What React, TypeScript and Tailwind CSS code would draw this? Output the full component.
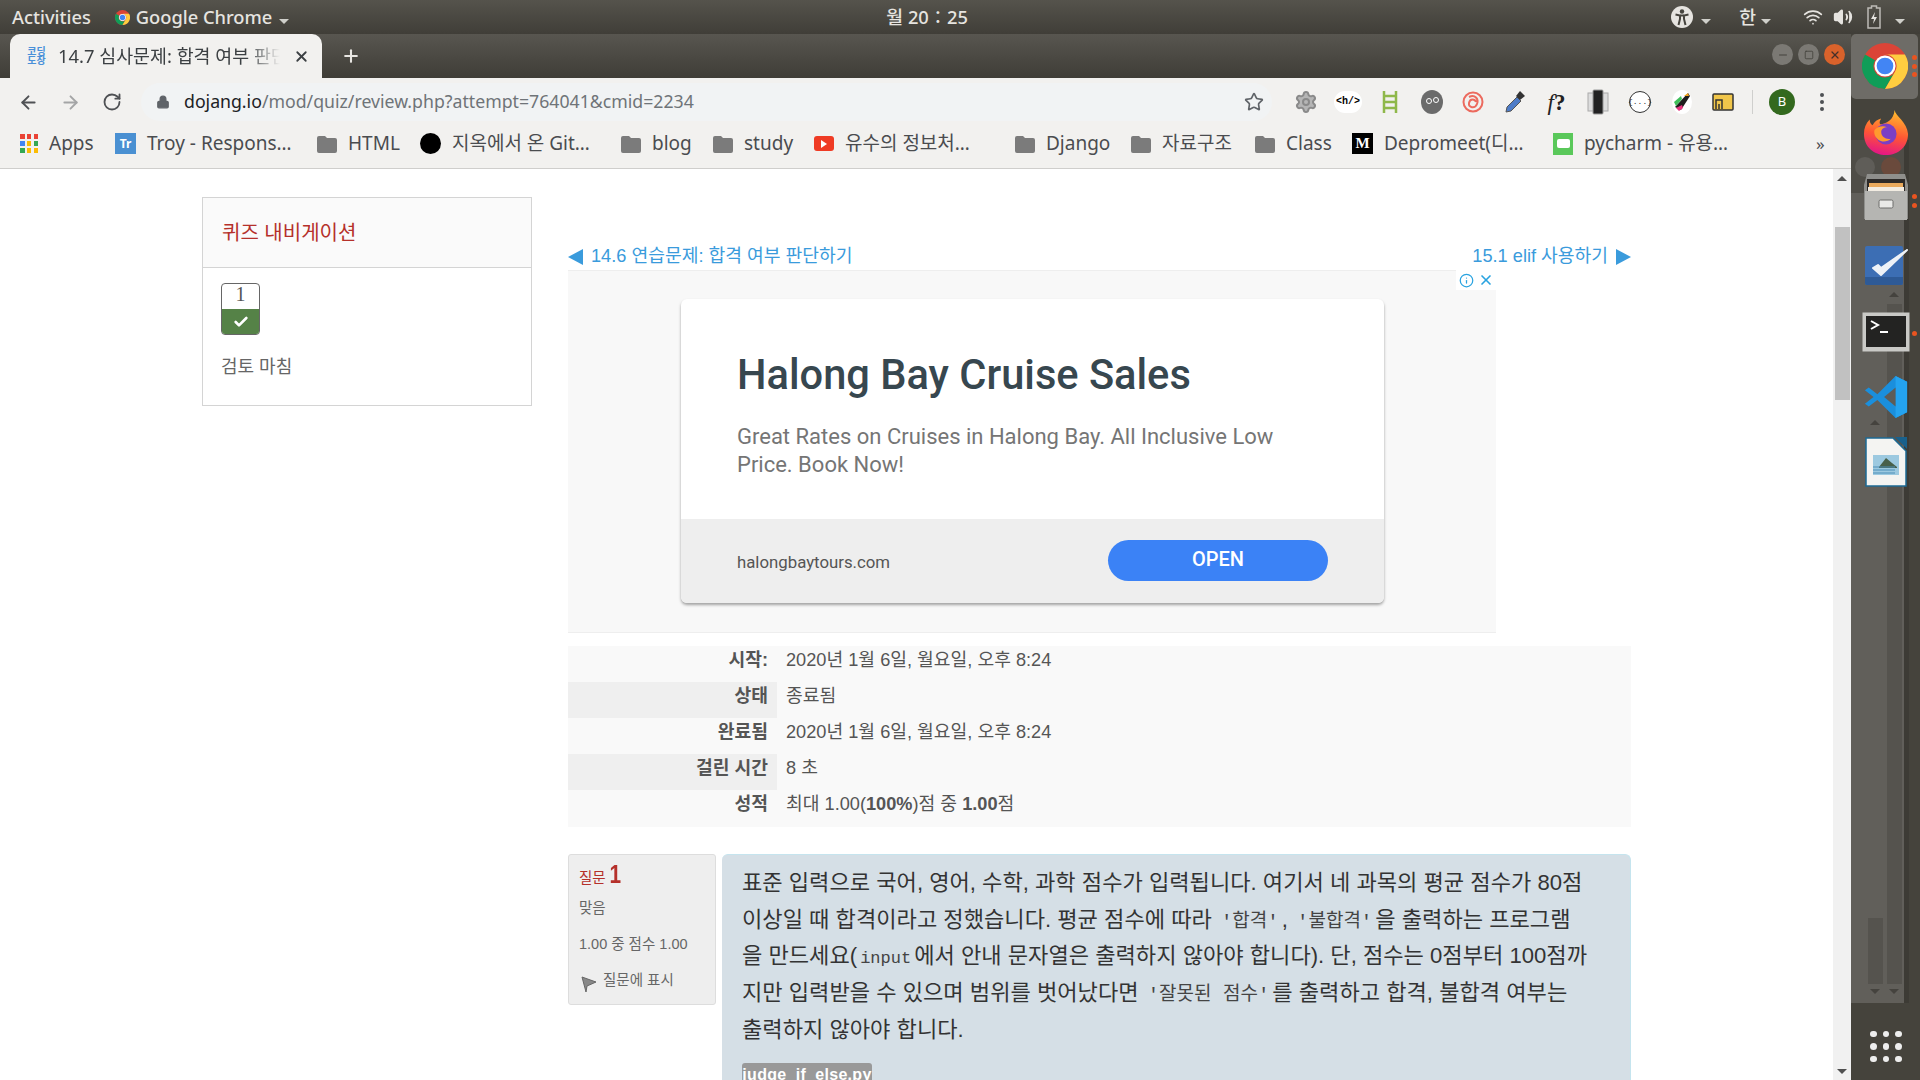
import { ArrowLeft, ArrowRight, RotateCw, Lock, Star, X, Plus, Check, Info, Minus, Square, Volume2, Wifi, Settings } from "lucide-react";

const ui = "font-['Noto_Sans','Noto_Sans_CJK_KR',sans-serif]";

function ChromeLogo({ size }: { size: number }) {
  return (
    <svg width={size} height={size} viewBox="0 0 48 48">
      <circle cx="24" cy="24" r="24" fill="#db4437" />
      <path d="M3.2 12A24 24 0 0 0 24 48L34.400 30A12 12 0 0 1 13.600 18Z" fill="#0f9d58" />
      <path d="M24 48A24 24 0 0 0 44.800 12H24a12 12 0 0 1 10.400 18Z" fill="#ffcd40" />
      <circle cx="24" cy="24" r="11" fill="#fff" />
      <circle cx="24" cy="24" r="8.700" fill="#4285f4" />
    </svg>
  );
}

function Firefox() {
  return (
    <svg width="46" height="46" viewBox="0 0 48 48">
      <defs>
        <linearGradient id="ff" x1="0.6" y1="0" x2="0.4" y2="1">
          <stop offset="0" stopColor="#ffbd2e" />
          <stop offset="0.55" stopColor="#ff5634" />
          <stop offset="1" stopColor="#e31587" />
        </linearGradient>
      </defs>
      <path d="M33 1c1 7 13 12 14 25 0 13-10 22-23 22C11 48 1 39 1 26c0-6 2-11 6-15 0 3 1 5 3 6 2-4 5-6 9-7-2 3-2 5-1 6 6-1 14-4 15-15Z" fill="url(#ff)" />
      <circle cx="24" cy="26" r="11" fill="#7b3fc4" />
      <path d="M12 22c3-4 9-5 13-3-3 0-6 2-6 5 0 5 5 8 10 7-3 3-9 4-13 1-3-2-5-6-4-10Z" fill="#ff9a2e" />
    </svg>
  );
}

function FilesIcon() {
  return (
    <svg width="46" height="48" viewBox="0 0 46 48">
      <path d="M4 1h38l3 11v34H1V12Z" fill="#8f8f8c" />
      <rect x="4" y="6" width="38" height="14" fill="#2d2a28" />
      <rect x="6" y="10" width="34" height="4" fill="#e9a95c" />
      <rect x="5" y="14" width="36" height="5" fill="#f2ece2" />
      <path d="M2 18h42v29H2Z" fill="#b5b5b2" />
      <rect x="16" y="27" width="14" height="8" rx="1.500" fill="#e9e9e7" stroke="#6c6c6a" />
    </svg>
  );
}

function TasksIcon() {
  return (
    <svg width="46" height="44" viewBox="0 0 46 44">
      <rect x="2" y="2" width="38" height="39" rx="2" fill="#3c6eb4" />
      <path d="M2 33h38v6a2 2 0 0 1-2 2H4a2 2 0 0 1-2-2Z" fill="#2e5a96" />
      <path d="M10 24l8 7L44 6 18 24l-3-3Z" fill="#eef2f7" stroke="#eef2f7" strokeWidth="2" strokeLinejoin="round" />
    </svg>
  );
}

function TerminalIcon() {
  return (
    <svg width="48" height="40" viewBox="0 0 48 40">
      <rect x="0.500" y="0.500" width="47" height="39" fill="#c9c9c6" />
      <rect x="4" y="4" width="40" height="31" fill="#232322" />
      <path d="M9 9l7 4-7 4" fill="none" stroke="#fff" strokeWidth="2" />
      <path d="M18 20h8" stroke="#fff" strokeWidth="2" />
    </svg>
  );
}

function VsCode() {
  return (
    <svg width="46" height="46" viewBox="0 0 48 48">
      <path d="M34 2 46 8v32l-12 6L15 27l-9 7-4-3 9-7-9-7 4-3 9 7Z" fill="#1a8fdd" />
      <path d="M34 2 46 8v32l-12 6Z" fill="#24a3f0" />
      <path d="M34 14 22 24l12 10Z" fill="#5e5c57" />
    </svg>
  );
}

function ImpressIcon() {
  return (
    <svg width="42" height="50" viewBox="0 0 42 50">
      <path d="M1 1h27l13 13v35H1Z" fill="#f4f4f2" stroke="#1c6a94" strokeWidth="1.500" />
      <path d="M30 0h12v12Z" fill="#19618c" />
      <rect x="8" y="18" width="26" height="20" fill="#9cc9e0" />
      <path d="M14 30l7-9 6 5 5 4v1H14Z" fill="#47604a" />
      <path d="M8 30h22M8 33h22M8 36h22" stroke="#4d8fb8" strokeWidth="1" />
    </svg>
  );
}

function FolderIcon() {
  return (
    <svg width="20" height="18" viewBox="0 0 20 18" className="shrink-0">
      <path d="M2 1h6l2 2h8a2 2 0 0 1 2 2v11a2 2 0 0 1-2 2H2a2 2 0 0 1-2-2V3a2 2 0 0 1 2-2Z" fill="#7b7b7b" />
    </svg>
  );
}

function AppsIcon() {
  const colors = ["#ea4335", "#ea4335", "#ea4335", "#4285f4", "#fbbc05", "#34a853", "#34a853", "#fbbc05", "#fbbc05"];
  return (
    <div className="grid grid-cols-3 gap-[2.500px] w-[18px] shrink-0">
      {colors.map((c, i) => (
        <span key={i} className="w-[4.500px] h-[4.500px]" style={{ background: c }} />
      ))}
    </div>
  );
}

function AccessIcon() {
  return (
    <svg width="22" height="22" viewBox="0 0 22 22">
      <circle cx="11" cy="11" r="11" fill="#e6e4e0" />
      <circle cx="11" cy="5.500" r="2.200" fill="#45433d" />
      <path d="M4.500 8.500 9 9.500v3.500L7.500 19M17.500 8.500 13 9.500v3.500l1.500 6M9 9.500h4" fill="none" stroke="#45433d" strokeWidth="2" />
    </svg>
  );
}

function BatteryIcon() {
  return (
    <svg width="14" height="24" viewBox="0 0 14 24">
      <path d="M4.500 1h5v2h3.500v20H1V3h3.500Z" fill="none" stroke="#bdbbb6" strokeWidth="1.500" />
      <path d="M8 7 4 14h3l-1 5 4-7H7Z" fill="#e6e4e0" />
    </svg>
  );
}

function Bookmark({ icon, label, className }: { icon: React.ReactNode; label: string; className: string }) {
  return (
    <div className={`flex items-center gap-[11px] whitespace-nowrap shrink-0 ${className}`}>
      {icon}
      <span>{label}</span>
    </div>
  );
}

function Caret({ color = "#cfcfca" }: { color?: string }) {
  return <span className="inline-block w-0 h-0 border-x-[5px] border-x-transparent border-t-[5px]" style={{ borderTopColor: color }} />;
}

function TopBar() {
  return (
    <div className={`h-[34px] shrink-0 flex items-center bg-gradient-to-b from-[#55534c] to-[#403e38] text-[#e6e4e0] text-[18.3px] font-medium pl-[12px] pr-[15px] ${ui}`}>
      <span>Activities</span>
      <div className="flex items-center ml-[24px] gap-[6px]">
        <ChromeLogo size={15} />
        <span>Google Chrome</span>
        <span className="ml-[1px]"><Caret /></span>
      </div>
      <span className="ml-[597px]">월 20∶25</span>
      <div className="ml-auto flex items-center">
        <AccessIcon />
        <span className="ml-[8px]"><Caret /></span>
        <span className="ml-[28px]">한</span>
        <span className="ml-[5px]"><Caret /></span>
        <Wifi className="ml-[32px] w-[20px] h-[20px]" />
        <Volume2 className="ml-[10px] w-[20px] h-[20px]" fill="#e6e4e0" />
        <span className="ml-[14px] flex"><BatteryIcon /></span>
        <span className="ml-[14px]"><Caret /></span>
      </div>
    </div>
  );
}

function TabStrip() {
  return (
    <div className={`h-[44px] shrink-0 flex items-end bg-gradient-to-b from-[#585650] to-[#3f3d37] pl-[10px] ${ui}`}>
      <div className="w-[312px] h-[44px] bg-[#f2f1ef] rounded-t-[10px] flex items-center pl-[17px] shrink-0">
        <div className="w-[19px] text-[10px] leading-[9px] font-bold text-[#4a90d9] text-center shrink-0">코딩<br />도장</div>
        <div className="ml-[12px] w-[222px] overflow-hidden whitespace-nowrap text-[18.4px] text-[#3c4043] [mask-image:linear-gradient(to_right,black_85%,transparent)]">14.7 심사문제: 합격 여부 판단하기</div>
        <X className="ml-[13px] w-[17px] h-[17px] text-[#3c4043] shrink-0" strokeWidth={2.5} />
      </div>
      <Plus className="ml-[19px] mb-[12px] w-[20px] h-[20px] text-[#e8e6e2] shrink-0" strokeWidth={2.5} />
      <div className="ml-auto mr-[6px] mb-[13px] flex items-center gap-[5px]">
        <span className="w-[21px] h-[21px] rounded-full bg-[#7b7974] flex items-center justify-center"><Minus className="w-[12px] h-[12px] text-[#45433d]" /></span>
        <span className="w-[21px] h-[21px] rounded-full bg-[#7b7974] flex items-center justify-center"><Square className="w-[10px] h-[10px] text-[#45433d]" /></span>
        <span className="w-[21px] h-[21px] rounded-full bg-[#d9622b] flex items-center justify-center"><X className="w-[12px] h-[12px] text-[#45302a]" strokeWidth={2.5} /></span>
      </div>
    </div>
  );
}

function ExtensionIcons() {
  return (
    <div className="flex items-center ml-[13px]">
      <div className="w-[42px] flex justify-center"><Settings className="w-[24px] h-[24px] text-[#8a8a8a]" fill="#b5b5b5" /></div>
      <div className="w-[42px] flex justify-center"><span className="font-['Liberation_Mono',monospace] font-bold text-[10px] text-black bg-white rounded-full px-[2px] leading-[22px]">&lt;h/&gt;</span></div>
      <div className="w-[42px] flex justify-center">
        <svg width="18" height="24" viewBox="0 0 18 24"><path d="M3 1v22M15 1v22M3 6h12M3 12h12M3 18h12" stroke="#8fb84a" strokeWidth="2.500" /></svg>
      </div>
      <div className="w-[41px] flex justify-center">
        <svg width="22" height="24" viewBox="0 0 22 24"><ellipse cx="11" cy="12" rx="11" ry="12" fill="#6b6b6b" /><circle cx="8" cy="11" r="2.500" fill="none" stroke="#fff" /><circle cx="15" cy="10" r="2.500" fill="none" stroke="#fff" /></svg>
      </div>
      <div className="w-[42px] flex justify-center">
        <svg width="22" height="24" viewBox="0 0 22 24" fill="none" stroke="#ec6a5e" strokeWidth="2"><circle cx="11" cy="12" r="9.500" /><path d="M7 7c6-3 10 2 8 7s-9 4-8-1 6-4 7-1" /></svg>
      </div>
      <div className="w-[42px] flex justify-center">
        <svg width="24" height="26" viewBox="0 0 24 26"><path d="M3 23l1-5L14 8l4 4L8 22Z" fill="#4d7cc9" stroke="#555" /><path d="M13 7l4-5 5 5-5 4Z" fill="#333" /></svg>
      </div>
      <div className="w-[41px] flex justify-center"><span className="font-['Liberation_Serif',serif] text-[23px] text-[#222] leading-none"><i>f</i><b>?</b></span></div>
      <div className="w-[42px] flex justify-center">
        <svg width="22" height="26" viewBox="0 0 22 26"><rect x="1" y="4" width="20" height="18" fill="#ddd" stroke="#aaa" /><rect x="6" y="1" width="10" height="24" rx="1" fill="#222" stroke="#999" /></svg>
      </div>
      <div className="w-[42px] flex justify-center"><span className="w-[22px] h-[22px] rounded-full border-[1.5px] border-[#333] bg-white flex items-center justify-center text-[8px] text-[#333] font-['Liberation_Mono',monospace]">{"{...}"}</span></div>
      <div className="w-[41px] flex justify-center">
        <svg width="22" height="24" viewBox="0 0 22 24"><ellipse cx="11" cy="12" rx="10" ry="12" fill="#fff" /><path d="M4 17 17 3l2 3-9 14Z" fill="#1d1d1d" /><path d="M3 12l7-6 1 3-6 7Z" fill="#3fbf5a" /><path d="M5 18l6-3 1 3-4 3Z" fill="#e9327f" /><path d="M13 6l4-3 1 3Z" fill="#f1a21d" /></svg>
      </div>
      <div className="w-[42px] flex justify-center">
        <svg width="22" height="18" viewBox="0 0 22 18"><rect x="1" y="1" width="20" height="16" rx="1" fill="#f1c64a" stroke="#333" strokeWidth="1.500" /><path d="M4 16V7h6v9M7 16v-5" fill="none" stroke="#333" strokeWidth="1.500" /></svg>
      </div>
    </div>
  );
}

function Toolbar() {
  return (
    <div className={`h-[48px] shrink-0 flex items-center bg-[#f2f1ef] pl-[18px] ${ui}`}>
      <ArrowLeft className="w-[21px] h-[21px] text-[#4f5154] shrink-0" strokeWidth={2.2} />
      <ArrowRight className="ml-[21px] w-[21px] h-[21px] text-[#a4a5a6] shrink-0" strokeWidth={2.2} />
      <RotateCw className="ml-[21px] w-[20px] h-[20px] text-[#4f5154] shrink-0" strokeWidth={2.2} />
      <div className="ml-[19px] w-[1131px] h-[38px] rounded-full bg-[#f1f3f4] flex items-center pl-[15px] pr-[8px] shrink-0">
        <Lock className="w-[14px] h-[14px] text-[#5f6368] shrink-0" fill="#5f6368" />
        <div className="ml-[14px] -mt-[1px] text-[17.7px] text-[#6f7478] whitespace-nowrap"><span className="text-[#202124]">dojang.io</span>/mod/quiz/review.php?attempt=764041&amp;cmid=2234</div>
        <Star className="ml-auto w-[20px] h-[20px] text-[#5f6368] shrink-0" strokeWidth={2} />
      </div>
      <ExtensionIcons />
      <div className="w-px h-[24px] bg-[#cfcfcd] ml-[8px]" />
      <span className="ml-[16px] w-[26px] h-[26px] rounded-full bg-[#33691e] text-white text-[13px] flex items-center justify-center shrink-0">B</span>
      <span className="ml-[25px] flex flex-col gap-[3px]">
        <i className="block w-[4px] h-[4px] rounded-full bg-[#4f5154]" />
        <i className="block w-[4px] h-[4px] rounded-full bg-[#4f5154]" />
        <i className="block w-[4px] h-[4px] rounded-full bg-[#4f5154]" />
      </span>
    </div>
  );
}

function BookmarksBar() {
  return (
    <div className={`h-[43px] shrink-0 flex items-center bg-[#f2f1ef] border-b border-[#cfcecc] pl-[20px] pb-[7px] text-[19px] text-[#4a4c4f] ${ui}`}>
      <Bookmark className="w-[95px]" icon={<AppsIcon />} label="Apps" />
      <Bookmark className="w-[202px]" icon={<span className="w-[21px] h-[21px] bg-[#4a90d2] text-white text-[12px] font-bold flex items-center justify-center">Tr</span>} label="Troy - Respons…" />
      <Bookmark className="w-[103px]" icon={<FolderIcon />} label="HTML" />
      <Bookmark className="w-[201px]" icon={<span className="w-[21px] h-[21px] bg-black rounded-full" />} label="지옥에서 온 Git…" />
      <Bookmark className="w-[92px]" icon={<FolderIcon />} label="blog" />
      <Bookmark className="w-[101px]" icon={<FolderIcon />} label="study" />
      <Bookmark className="w-[201px]" icon={<span className="w-[20px] h-[15px] bg-[#ef3b24] rounded-[3px] flex items-center justify-center"><span className="w-0 h-0 border-y-[4px] border-y-transparent border-l-[6px] border-l-white" /></span>} label="유수의 정보처…" />
      <Bookmark className="w-[116px]" icon={<FolderIcon />} label="Django" />
      <Bookmark className="w-[124px]" icon={<FolderIcon />} label="자료구조" />
      <Bookmark className="w-[97px]" icon={<FolderIcon />} label="Class" />
      <Bookmark className="w-[201px]" icon={<span className="w-[21px] h-[21px] bg-black text-white text-[15px] font-bold font-['Liberation_Serif',serif] flex items-center justify-center">M</span>} label="Depromeet(디…" />
      <Bookmark className="w-[240px]" icon={<span className="w-[20px] h-[22px] bg-[#5ac85a] flex items-center justify-center"><span className="w-[13px] h-[9px] bg-white rounded-[2px]" /></span>} label="pycharm - 유용…" />
      <span className="ml-[23px] text-[17px]">»</span>
    </div>
  );
}

function QuizSidebar() {
  return (
    <div className="w-[330px] h-[209px] mt-[28px] shrink-0 border border-[#d4d4d4] bg-white">
      <div className="h-[70px] bg-[#fafafa] border-b border-[#d4d4d4] flex items-center pl-[19px] text-[20px] text-[#b5302a]">퀴즈 내비게이션</div>
      <div className="pl-[18px] pt-[15px]">
        <div className="w-[39px] h-[52px] rounded-[4px] border border-[#666] overflow-hidden flex flex-col">
          <div className="h-[25px] text-center text-[20px] leading-[21px] text-[#555] font-['Liberation_Serif',serif]">1</div>
          <div className="flex-1 bg-[#558247] flex items-center justify-center"><Check className="w-[16px] h-[16px] text-white" strokeWidth={4} /></div>
        </div>
        <div className="mt-[19px] text-[18px] text-[#666]">검토 마침</div>
      </div>
    </div>
  );
}

function AdBlock() {
  return (
    <div className="relative w-[928px] h-[363px] bg-[#f8f8f8] border-t border-b border-[#eeeeee] font-['Roboto',sans-serif] pt-[28px] pl-[113px]">
      <div className="absolute -top-[1px] right-0 w-[40px] h-[20px] bg-white flex items-center justify-center gap-[4px] text-[#29a3e0]">
        <Info className="w-[15px] h-[15px]" />
        <X className="w-[16px] h-[16px]" strokeWidth={2.5} />
      </div>
      <div className="w-[703px] h-[304px] rounded-[6px] overflow-hidden bg-white shadow-[0_2px_3px_rgba(0,0,0,0.35)] flex flex-col">
        <div className="h-[220px] pl-[56px] pt-[52px]">
          <div className="text-[41.6px] leading-[48px] font-medium text-[#37474f] whitespace-nowrap">Halong Bay Cruise Sales</div>
          <div className="mt-[24px] text-[22px] leading-[28px] text-[#757575] w-[560px]">Great Rates on Cruises in Halong Bay. All Inclusive Low Price. Book Now!</div>
        </div>
        <div className="flex-1 bg-[#eeeeee] flex items-center pl-[56px]">
          <span className="text-[16.8px] text-[#555] mt-[3px]">halongbaytours.com</span>
          <div className="ml-auto mr-[56px] mb-[2px] w-[220px] h-[41px] rounded-full bg-[#3b82f6] text-white text-[20px] font-medium flex items-center justify-center pb-[2px]">OPEN</div>
        </div>
      </div>
    </div>
  );
}

const summaryRows = [
  { label: "시작:", value: <>2020년 1월 6일, 월요일, 오후 8:24</> },
  { label: "상태", value: <>종료됨</>, alt: true },
  { label: "완료됨", value: <>2020년 1월 6일, 월요일, 오후 8:24</> },
  { label: "걸린 시간", value: <>8 초</>, alt: true },
  { label: "성적", value: <>최대 1.00(<b>100%</b>)점 중 <b>1.00</b>점</> },
];

function SummaryTable() {
  return (
    <div className="mt-[13px] bg-[#f9f9f9] text-[18.2px] text-[#555] pb-px">
      {summaryRows.map((r) => (
        <div key={r.label} className="flex h-[36px] items-center">
          <div className={`w-[209px] h-full flex items-center justify-end pr-[9px] pb-[7px] font-bold ${r.alt ? "bg-[#efefef]" : ""}`}>{r.label}</div>
          <div className="pl-[9px] pb-[7px]">{r.value}</div>
        </div>
      ))}
    </div>
  );
}

const monoHangul = "font-['Liberation_Mono','Noto_Sans_CJK_KR',monospace] text-[19px] leading-none px-[3px] text-[#444]";
const monoLatin = "font-['Liberation_Mono',monospace] text-[17px] leading-none px-[3px] text-[#444]";

function Question() {
  return (
    <div className="mt-[27px] flex gap-[6px] items-start">
      <div className="w-[148px] h-[151px] shrink-0 bg-[#eeeeee] border border-[#dddddd] rounded-[3px] pl-[10px] pt-[4px] text-[14.5px] text-[#666]">
        <div className="h-[30px] flex items-baseline text-[#b5302a]">질문<span className="ml-[2px] text-[26px] leading-[30px] font-bold font-['Liberation_Sans',sans-serif] scale-x-[0.8]">1</span></div>
        <div className="mt-[9px]">맞음</div>
        <div className="mt-[14px]">1.00 중 점수 1.00</div>
        <div className="mt-[19px] flex items-center pl-[2px]">
          <svg width="16" height="18" viewBox="0 0 16 18"><path d="M1 2l14 5-9 4-1 6Z" fill="#888" stroke="#666" /></svg>
          <span className="ml-[6px] -mt-[6px]">질문에 표시</span>
        </div>
      </div>
      <div className="flex-1 h-[300px] bg-[#d5dfe6] border-t border-[#c5e4ee] border-r rounded-[6px] pl-[20px] pt-[10px] text-[22.1px] leading-[36.7px] text-[#333] whitespace-nowrap">
        표준 입력으로 국어, 영어, 수학, 과학 점수가 입력됩니다. 여기서 네 과목의 평균 점수가 80점<br />
        이상일 때 합격이라고 정했습니다. 평균 점수에 따라 <span className={monoHangul}>'합격'</span>, <span className={monoHangul}>'불합격'</span>을 출력하는 프로그램<br />
        을 만드세요(<span className={monoLatin}>input</span>에서 안내 문자열은 출력하지 않아야 합니다). 단, 점수는 0점부터 100점까<br />
        지만 입력받을 수 있으며 범위를 벗어났다면 <span className={monoHangul}>'잘못된 점수'</span>를 출력하고 합격, 불합격 여부는<br />
        출력하지 않아야 합니다.
        <div className="mt-[14px] w-[130px] h-[24px] rounded-[3px] bg-[#999999] text-white text-[16px] leading-[24px] font-bold text-center font-['Liberation_Sans',sans-serif] tracking-[0.3px]">judge_if_else.py</div>
      </div>
    </div>
  );
}

function Scrollbar() {
  return (
    <div className="w-[18px] shrink-0 bg-[#f1f1f1] flex flex-col items-center pt-[7px] pb-[6px]">
      <span className="w-0 h-0 border-x-[5px] border-x-transparent border-b-[5px] border-b-[#505050]" />
      <div className="mt-[46px] w-[15px] h-[173px] bg-[#c1c1c1]" />
      <span className="mt-auto w-0 h-0 border-x-[5px] border-x-transparent border-t-[5px] border-t-[#505050]" />
    </div>
  );
}

function Dock() {
  return (
    <div className="relative w-[69px] shrink-0 bg-[#45433c] overflow-hidden">
      {/* window behind the dock */}
      <div className="absolute left-0 top-[106px] w-[53px] h-[863px] bg-[#615f5a]">
        <div className="h-[53px] bg-[#4f4d47] flex items-center pl-[4px] gap-[6px]">
          <span className="w-[20px] h-[20px] rounded-full bg-[#5f5d58]" />
          <span className="w-[20px] h-[20px] rounded-full bg-[#6a4a3c]" />
        </div>
      </div>
      <div className="absolute left-[17px] top-[884px] w-[15px] h-[66px] bg-[#55534e]" />
      <div className="absolute left-[36px] top-[270px] w-[15px] h-[680px] bg-[#55534e]" />
      <span className="absolute left-[19px] top-[955px] w-0 h-0 border-x-[5px] border-x-transparent border-t-[5px] border-t-[#45433e]" />
      <span className="absolute left-[38px] top-[955px] w-0 h-0 border-x-[5px] border-x-transparent border-t-[5px] border-t-[#45433e]" />
      <span className="absolute left-[38px] top-[258px] w-0 h-0 border-x-[5px] border-x-transparent border-b-[5px] border-b-[#45433e]" />
      <span className="absolute left-[19px] top-[386px] w-0 h-0 border-x-[5px] border-x-transparent border-b-[5px] border-b-[#45433e]" />
      <div className="absolute left-[53px] top-[106px] w-[5px] h-[863px] bg-[#3d3b35]" />
      <div className="absolute left-[0px] top-[0px] w-[67px] h-[65px] rounded-[5px] bg-[#6e6c67]" />
      <div className="relative flex flex-col items-center">
        <div className="h-[64px] flex items-center pr-[1px]"><ChromeLogo size={46} /></div>
        <div className="h-[66px] flex items-center pt-[2px]"><Firefox /></div>
        <div className="h-[66px] flex items-center"><FilesIcon /></div>
        <div className="h-[66px] flex items-center pt-[6px]"><TasksIcon /></div>
        <div className="h-[66px] flex items-center pt-[6px]"><TerminalIcon /></div>
        <div className="h-[66px] flex items-center pt-[3px]"><VsCode /></div>
        <div className="h-[66px] flex items-center pt-[2px]"><ImpressIcon /></div>
      </div>
      {/* running indicators */}
      <span className="absolute left-[61px] top-[21px] w-[5px] h-[5px] rounded-full bg-[#e95420]" />
      <span className="absolute left-[61px] top-[30px] w-[5px] h-[5px] rounded-full bg-[#e95420]" />
      <span className="absolute left-[61px] top-[38px] w-[5px] h-[5px] rounded-full bg-[#e95420]" />
      <span className="absolute left-[61px] top-[160px] w-[5px] h-[5px] rounded-full bg-[#e95420]" />
      <span className="absolute left-[61px] top-[169px] w-[5px] h-[5px] rounded-full bg-[#e95420]" />
      <span className="absolute left-[61px] top-[297px] w-[5px] h-[5px] rounded-full bg-[#e95420]" />
      <div className="absolute left-[19px] bottom-[18px] grid grid-cols-3 gap-[6px]">
        {Array.from({ length: 9 }).map((_, i) => (
          <span key={i} className="w-[6.500px] h-[6.500px] rounded-full bg-[#eeeeee]" />
        ))}
      </div>
    </div>
  );
}

export default function App() {
  return (
    <div className="w-[1920px] h-[1080px] overflow-hidden flex flex-col font-['Liberation_Sans','Noto_Sans_CJK_KR',sans-serif]">
      <TopBar />
      <div className="flex-1 min-h-0 flex">
        <div className="w-[1851px] shrink-0 flex flex-col">
          <TabStrip />
          <Toolbar />
          <BookmarksBar />
          <div className="flex-1 min-h-0 flex bg-white">
            <div className="flex-1 min-w-0 overflow-hidden flex pl-[202px]">
              <QuizSidebar />
              <div className="ml-[36px] w-[1063px] shrink-0 pt-[72px]">
                <div className="h-[29px] pt-[2px] flex items-center justify-between text-[18.2px] text-[#3a9bdc]">
                  <div className="flex items-center gap-[8px]">
                    <span className="w-0 h-0 border-y-[8px] border-y-transparent border-r-[15px] border-r-[#3a9bdc]" />
                    14.6 연습문제: 합격 여부 판단하기
                  </div>
                  <div className="flex items-center gap-[8px]">
                    15.1 elif 사용하기
                    <span className="w-0 h-0 border-y-[8px] border-y-transparent border-l-[15px] border-l-[#3a9bdc]" />
                  </div>
                </div>
                <AdBlock />
                <SummaryTable />
                <Question />
              </div>
            </div>
            <Scrollbar />
          </div>
        </div>
        <Dock />
      </div>
    </div>
  );
}
